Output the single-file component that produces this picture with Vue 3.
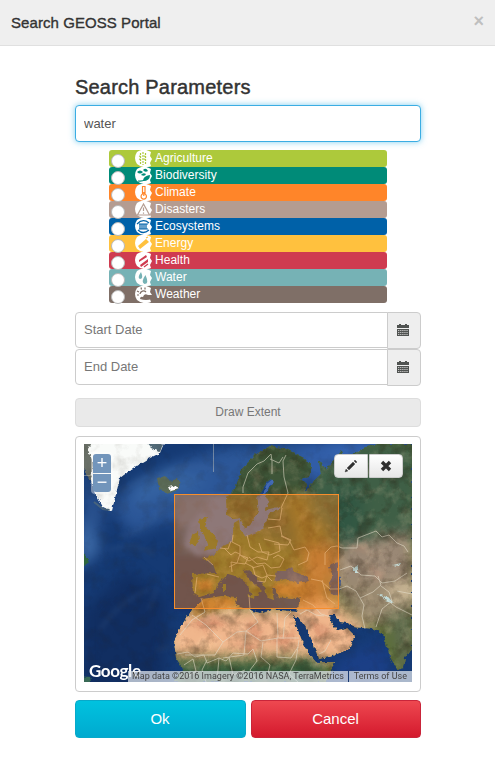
<script setup>
import { ref } from 'vue'

const query = ref('water')
const areas = [
  { name: 'Agriculture', color: '#adc93b', icon: 'M8 2v13M5.500 3v11M10.500 3v11M4 6l3 1M9 6l3 1M4 9l3 1M9 9l3 1', fill: '', dash: '2 1' },
  { name: 'Biodiversity', color: '#008b78', icon: 'M3 14Q10 15 14 9', fill: 'M2 5q3-3 6 0q-3 3-6 0M8 3q3-3 5 1q-3 2-5-1M6 8q2-3 5-1q-1 3-5 1M8 14q0-5 7-6q0 6-7 6' },
  { name: 'Climate', color: '#ff8529', icon: 'M7.500 2.500v7.500a2.700 2.700 0 1 0 2.500 0V2.500zM8.800 8v4', fill: '' },
  { name: 'Disasters', color: '#b49c91', icon: 'M8.500 3L2.500 14h12zM8.500 6.500V10M8.500 11.500v1.200', fill: '' },
  { name: 'Ecosystems', color: '#0061a8', icon: 'M2 6Q8 0 14 5M3 12Q8 17 14 12M5 6v5M7 6v5M9 6v5M11 6v5M4 6h9M4 11h9', fill: '' },
  { name: 'Energy', color: '#ffc13e', icon: 'M11 3l2-1', fill: 'M3 11l8-7 3 3-9 7z' },
  { name: 'Health', color: '#cf3b50', icon: 'M9 15l4-3', fill: 'M4 8l7-5 1 2-8 5zM5 13l8-6 0 3-7 5z' },
  { name: 'Water', color: '#76b2b5', icon: '', fill: 'M6 3q-4 6-1 7q4 0 1-7M10.500 6q-5 7-1 9q5 0 1-9' },
  { name: 'Weather', color: '#7f6f67', icon: 'M5 8a3.500 3.500 0 0 1 6-2M2 5l2 1M6 1.500l.5 2M10 1.500v2M2 9h2', fill: 'M5 13q0-3 3-2q1-4 5-2h4v4q-6 2-12 0' },
]
const dates = ['Start Date', 'End Date']
const borders = [
  'M243 493l0-6 5-14 9-9 7-3 7-7 1 7 0 13M270 459l9 4 4-6M286 455l-3 6 1 16 4 16-7 15',
  'M282 508l-2 12-12-1M268 528l12-2 2 10 9 4-3 5-14-1M264 539l15 4 1 8-10 4-8-3-3-9',
  'M281 536l8 4 5 10 11-3 4 6-2 8-9 4M247 535l3 12 8 5 11 0-2 8-10-3-8 4-9-6 0-9-8-4 1-7',
  'M224 548l7 7 4-3 5 2-3 9-6-1 1 10M220 548l8 1 3-8M229 567l8-4 8 1 3-6-8-3M249 557l8 7 8-1 6 5 9-1 4-8-6-4-5 3',
  'M245 563l8 4 2 8 7 3 5-2 5 5M252 568l11-3 4 10 9 1M267 575l-2 7-8-1M197 577l-2 16M207 574l12 3M204 557l9 8',
  'M325 565l0-12 6-6 6-1 5 2h15l1-10 18-7 6 6 7-2 8 8 7 3 4 6',
  'M311 579l10 2 9 8 9 0 8-3 9 5 8 14-2 11 3 13M340 570l11-4 10 9 14 1 7 7 13-2 12-8M360 598l13-6 8-7-3-9M381 586l8 6 3 9-10 8-6 18',
  'M322 580l5 18 8 6M303 600l10 5 8 9 10 3M300 614l7-4 9 5 8 1M291 612l-6 6-2 21M331 640l-6 11-6 3',
  'M201 598l4 14-13 8-12 15M192 615l14 10 17 17 14-10 9-1 12-9-8-12-1-15M223 642l-8 13-30 0M246 631l15 10 17-3-1-25M277 638l22 0M246 631l-2 24-21 3',
  'M177 654l11-2 7 5 9-2 3 8 12-5 7 3 7-8 15 1 5-5 4 12-7 9 6 10M263 642l-2 15 9 8-3 12M277 638l0 19 14 1 7-11M299 640l-3 20-7 14 9 8',
  'M184 665l9-6 3 12-7 5M207 660l-5 10 4 12M219 658l-2 22M229 657l4 18 12-5M387 600l9 7 16 8M397 591l15 3',
]
</script>

<template>
  <div class="dialog">
    <header>
      <h1>Search GEOSS Portal</h1>
      <button class="close" aria-label="Close">×</button>
    </header>

    <main>
      <h2>Search Parameters</h2>
      <input v-model="query" class="query" type="text" />

      <div class="areas">
        <label v-for="a in areas" :key="a.name" class="area" :style="{ background: a.color }">
          <span class="radio"></span>
          <svg class="badge" width="17" height="17" viewBox="0 0 17 17">
            <path d="M2 2Q8-2 14 1l2 1-1 4 2 3-2 4 1 3Q8 19 2 14-2 8 2 2" fill="#fff" />
            <path :d="a.icon" fill="none" :stroke="a.color" stroke-width="1.200" :stroke-dasharray="a.dash" />
            <path :d="a.fill" :fill="a.color" />
          </svg>
          <span class="name">{{ a.name }}</span>
        </label>
      </div>

      <div v-for="d in dates" :key="d" class="date">
        <span class="field">{{ d }}</span>
        <span class="addon">
          <svg width="12" height="13" viewBox="0 0 12 13">
            <path d="M0 1h12v3H0zM2 0h2v2H2zM8 0h2v2H8zM0 5h12v7H0z" fill="#505351" />
            <path d="M1 6.500h10M1 8.500h10M1 10.500h10" stroke="#c4c4c4" stroke-dasharray="1.300 .8" />
          </svg>
        </span>
      </div>

      <button class="extent">Draw Extent</button>

      <div class="panel">
        <div class="map">
          <svg class="tiles" viewBox="84 444 328 238" preserveAspectRatio="none">
            <defs>
              <filter id="soft" x="-50%" y="-50%" width="200%" height="200%" color-interpolation-filters="sRGB"><feGaussianBlur stdDeviation="7" /></filter>
              <filter id="mid" x="-50%" y="-50%" width="200%" height="200%" color-interpolation-filters="sRGB"><feGaussianBlur stdDeviation="2.500" /></filter>
              <filter id="rough" x="-5%" y="-5%" width="110%" height="110%" color-interpolation-filters="sRGB">
                <feTurbulence type="fractalNoise" baseFrequency=".25" numOctaves="2" seed="4" result="n" />
                <feDisplacementMap in="SourceGraphic" in2="n" scale="4" xChannelSelector="R" yChannelSelector="G" result="d" />
                <feGaussianBlur in="d" stdDeviation=".4" />
              </filter>
              <filter id="grain" x="0" y="0" width="100%" height="100%" color-interpolation-filters="sRGB">
                <feTurbulence type="fractalNoise" baseFrequency=".07" numOctaves="5" seed="8" />
                <feColorMatrix values="0 0 0 0 .15  0 0 0 0 .1  0 0 0 0 .05  2.5 0 0 0 -1.15" />
              </filter>
              <filter id="glints" x="0" y="0" width="100%" height="100%" color-interpolation-filters="sRGB">
                <feTurbulence type="fractalNoise" baseFrequency=".08" numOctaves="5" seed="21" />
                <feColorMatrix values="0 0 0 0 1  0 0 0 0 .87  0 0 0 0 .72  0 2.5 0 0 -1.2" />
              </filter>
              <clipPath id="land">
                <path d="M174 682L183 669 176 658 174 641 181 626 192 610 203 599 222 596 237 597 235 603 240 607 246 609 260 613 272 609 297 612 301 596 292 599 278 597 275 588 272 588 274 600 268 598 264 586 257 577 248 569 243 570 250 580 261 589 258 597 251 594 248 585 239 577 228 574 219 583 214 593 199 597 193 593 192 574 216 573 213 564 203 558 214 555 221 547 232 542 234 523 239 520 240 531 248 535 263 529 268 517 271 512 283 509 266 510 264 500 274 480 269 479 261 491 257 498 259 510 254 518 250 525 245 528 240 518 234 519 227 515 226 498 235 489 242 469 255 455 270 446 286 449 304 458 312 467 309 477 299 479 307 483 305 492 313 482 321 474 319 460 326 470 336 458 342 450 344 459 354 454 364 448 377 444 412 444 412 648 405 657 403 668 398 671 390 657 383 634 375 629 352 627 348 623 340 622 335 615 329 615 332 624 338 630 347 628 355 636 349 649 330 657 318 659 314 645 307 629 298 617 293 616 297 628 303 643 310 655 316 662 334 662 330 675 325 682z" />
              </clipPath>
            </defs>
            <rect x="84" y="444" width="328" height="238" fill="#153a74" />
            <g filter="url(#soft)">
              <path d="M110 505Q155 462 233 447L412 434V484H284L240 488 224 540 206 556 184 551 179 520 159 523 132 534z" fill="#2c5798" />
              <path d="M300 444h110v40H300z" fill="#315da6" />
              <path d="M84 465L104 510 96 544 84 568z" fill="#2b5390" />
              <path d="M130 485l40-19 38 12-23 17-28 2-21 10z" fill="#3563a2" />
              <path d="M78 520h6l18 28-18 18H78z" fill="#3c69a6" />
              <path d="M84 610L128 570 167 598 164 690 84 690z" fill="#112e61" />
              <path d="M345 655l40-15 10 45h-70z" fill="#1b3f86" />
              <path d="M318 445q30 15 60-3z" fill="#3e6fc2" />
            </g>
            <g filter="url(#mid)">
              <path d="M206 496h85v44H235L216 556H198L184 546 190 522z" fill="#446bb4" />
              <path d="M178 500l36-6-20 26-16 10z" fill="#3a5fa0" />
              <path d="M174 556h30l8 15h44l26 40h-92l-18 0z" fill="#14316c" />
            </g>
            <path d="M153 484Q177 455 220 472M164 504Q150 530 119 537M110 550q24-10 44 5M100 630q19-29 50-41M157 588l-8 22M169 647l-13 3M120 492l30-18" fill="none" stroke="#5678a6" opacity=".18" stroke-width="3" filter="url(#mid)" />
            <g filter="url(#rough)">
              <path d="M80 440h17l-3 22-2 20-4-4-8-18z" fill="#6a7068" />
              <path d="M91 441h74l-5 12-12 6-15 9-13 10-4 16-4 17-9-4-8-14-4-12 2-19-5-12z" fill="#f9fbf9" />
              <path d="M145 441h19l-4 11-9-4z" fill="#536b79" />
              <path d="M80 551l9 8-3 7-6-1z" fill="#2f663e" />
              <path d="M157 478l8-2 4 5 8-2 4 6-5 6-10 2-7-5z" fill="#5b6b57" />
              <path d="M169 487l8-2 1 4-7 2z" fill="#fff" />
              <path d="M80 676l10 1 2 7H80z" fill="#386a56" />
            </g>
            <path d="M94 502l9 7 7 1" fill="none" stroke="#607475" opacity=".6" stroke-width="2" />
            <g filter="url(#rough)">
              <g clip-path="url(#land)">
                <rect x="84" y="440" width="328" height="242" fill="#5c7034" />
                <g filter="url(#soft)">
                  <path d="M220 440h80l20 50-25 60-70-30z" fill="#3e5538" />
                  <path d="M282 494h65v62h-45z" fill="#6b6a30" />
                  <path d="M310 440h110v104l-57-2-53-25z" fill="#3f5f46" />
                  <path d="M328 490h34v60h-34z" fill="#315743" />
                  <path d="M302 545h38v35h-36zM285 580h42v30h-30z" fill="#a17240" />
                  <path d="M335 550h80v75h-51l-31-36z" fill="#9a8a70" />
                  <path d="M341 545l71-15v52h-69z" fill="#9a8875" />
                  <path d="M168 608h138l22-12 37 32 5 27-45 8-19-6H165z" fill="#f0b68c" />
                  <path d="M165 662h160v34H165z" fill="#335b3d" />
                  <path d="M391 580h30v22h-32z" fill="#c9b694" />
                  <path d="M385 611h32v49l-19 15z" fill="#5e6b4c" />
                </g>
                <path d="M192 598h43v8l-43 12zM274 583h34v13h-34zM197 580h16v10h-16z" fill="#b08040" filter="url(#mid)" />
                <g filter="url(#mid)" opacity=".5">
                  <path d="M190 624l22-9 14 9-19 7zM247 620l16 9-4 13-10-10zM229 643l29 1-4 8zM270 642l26-13-8 18zM309 621l23 8-13 11z" fill="#c97a5c" />
                  <path d="M198 638l20 7-14 5zM215 607l20 0-2 14zM278 620l12 6-7 11z" fill="#ffd1a1" />
                  <path d="M299 660l13 0-9 22h-14z" fill="#2f6242" />
                  <path d="M367 565l18 8-7 9zM345 550l20-7 3 9z" fill="#b98f79" />
                </g>
              </g>
              <path d="M199 519l8-2-2 10 8 7 5 8-2 6-13 3 5-7-4-9-4-7zM192 535l6-3 1 9-4 5-6-2zM223 584l3 0 0 8-3 0zM247 595l9 0-2 4z" fill="#596f32" />
              <path d="M274 582l3-11 8 0 7-4 3 5 13 5 2 4-13 2-12-4zM331 564l8-2-2 8 3 9-1 17-8-2-2-11 4-7-4-9z" fill="#2b4a8a" />
              <path d="M260 496l5-2 4 8-4 9-1 8-7 13-13 5 3-7 7-5 4-14z" fill="#446bb4" />
              <path d="M264 512l16-4M265 493l3-8 5-4" fill="none" stroke="#446bb4" stroke-width="3" />
              <path d="M353 568l4-2 0 6-4 0zM393 565l8-2-2 3zM378 594l11 4 5 5-9-3z" fill="#c1dcda" />
            </g>
            <g clip-path="url(#land)">
              <rect x="84" y="444" width="328" height="238" filter="url(#grain)" opacity=".28" />
              <rect x="84" y="444" width="328" height="238" filter="url(#glints)" opacity=".2" />
            </g>
            <g fill="none" stroke="#e4decb" stroke-width=".9" opacity=".65" stroke-linejoin="round">
              <path v-for="(b, i) in borders" :key="i" :d="b" />
              <path d="M213.500 444v28M84 475.500h8" opacity=".7" />
            </g>
            <rect x="84" y="444" width="328" height="238" filter="url(#grain)" opacity=".12" />
            <rect x="174.500" y="494.500" width="164" height="114" fill="#ff8c1e" fill-opacity=".4" stroke="#f78e2c" />
          </svg>
          <div class="zoomer"><button>+</button><button>−</button></div>
          <div class="tools">
            <button aria-label="Edit"><svg width="14" height="14" viewBox="0 0 14 14"><path d="M1 13l1-3 2 2zM3 9l6-6 2 2-6 6zM10 2l1-1 2 2-1 1z" fill="#303030" stroke="#303030" stroke-width=".3" /></svg></button>
            <button aria-label="Clear"><svg width="12" height="12" viewBox="0 0 12 12"><path d="M2 2l8 8M10 2l-8 8" stroke="#303030" stroke-width="3.400" /></svg></button>
          </div>
          <span class="google">Google</span>
          <div class="credits"><span>Map data ©2016 Imagery ©2016 NASA, TerraMetrics</span><i></i><span>Terms of Use</span></div>
        </div>
      </div>

      <div class="actions">
        <button class="ok">Ok</button>
        <button class="cancel">Cancel</button>
      </div>
    </main>
  </div>
</template>

<style>
body { margin: 0; background: #fff; }
</style>

<style scoped>
* { box-sizing: border-box; }
.dialog { width: 495px; height: 770px; overflow: hidden; font-family: "Liberation Sans", Arial, sans-serif; color: #333; }
button { font-family: inherit; margin: 0; padding: 0; }
header { height: 46px; display: flex; justify-content: space-between; padding: 0 11px; background: #efefef; border-bottom: 1px solid #e0e0e0; }
h1 { margin: 0; font-size: 15px; line-height: 46px; font-weight: 400; -webkit-text-stroke: .35px #333; letter-spacing: .07px; }
.close { border: 0; background: none; font-size: 18px; font-weight: 700; color: #bfbfbf; height: 43px; line-height: 43px; }
main { width: 346px; margin-left: 75px; padding-top: 29px; }
h2 { margin: 0; height: 30px; line-height: 25px; font-size: 20px; font-weight: 400; -webkit-text-stroke: .45px #333; letter-spacing: .2px; }
.query { display: block; width: 346px; height: 37px; padding: 0 8px; border: 1px solid #3bade3; border-radius: 4px; outline: 0; box-shadow: 0 0 6px rgba(60, 180, 230, .65); font: 13px "Liberation Sans", Arial, sans-serif; color: #555; }
.areas { margin: 8px 34px 0; }
.area { display: flex; height: 17px; border-radius: 3px; padding-left: 2px; color: #fff; font-size: 12px; line-height: 16px; }
.radio { width: 14px; height: 14px; margin-top: 4px; border-radius: 50%; background: #fff; border: 1px solid #b8b8b8; flex: none; position: relative; z-index: 1; }
.badge { margin-left: 10px; flex: none; }
.name { margin-left: 3px; letter-spacing: .03px; }
.date { display: flex; height: 36px; margin-top: 1px; }
.areas + .date { margin-top: 9px; }
.field { flex: 1; border: 1px solid #ccc; border-radius: 4px 0 0 4px; padding-left: 8px; line-height: 34px; font-size: 13px; color: #777; }
.addon { width: 34px; height: 37px; margin-left: -1px; padding-right: 2px; display: flex; align-items: center; justify-content: center; background: #eee; border: 1px solid #ccc; border-radius: 0 4px 4px 0; }
.extent { display: block; width: 346px; height: 29px; margin-top: 13px; border: 1px solid #ddd; border-radius: 4px; background: #eaeaea; color: #777; font-size: 12px; padding-bottom: 2px; }
.panel { height: 256px; margin-top: 9px; padding: 7px 8px; border: 1px solid #ccc; border-radius: 4px; }
.map { position: relative; width: 328px; height: 238px; overflow: hidden; }
.tiles { display: block; width: 328px; height: 238px; }
.zoomer { position: absolute; left: 7px; top: 8px; width: 22px; height: 42px; padding: 2px; border-radius: 4px; background: rgba(255, 255, 255, .4); display: grid; gap: 1px; }
.zoomer button { border: 0; background: #7295bb; color: #fff; font-size: 18px; line-height: 17px; }
.zoomer button:first-child { border-radius: 3px 3px 0 0; }
.zoomer button:last-child { border-radius: 0 0 3px 3px; }
.tools { position: absolute; left: 250px; top: 10px; display: flex; gap: 1px; }
.tools button { width: 34px; height: 24px; display: flex; align-items: center; justify-content: center; border: 1px solid #ccc; background: linear-gradient(#fff, #e6e6e6); }
.tools button:first-child { border-radius: 4px 0 0 4px; }
.tools button:last-child { border-radius: 0 4px 4px 0; }
.google { position: absolute; left: 5px; top: 217px; font: 700 17px/20px Lato, sans-serif; color: #fff; letter-spacing: -.4px; }
.credits { position: absolute; right: 0; bottom: 0; width: 284px; height: 11px; display: flex; justify-content: space-between; padding: 0 5px 0 4px; background: rgba(229, 233, 239, .72); color: #444; font: 9px/11px Roboto, sans-serif; white-space: nowrap; }
.credits i { width: 1px; background: #183870; }
.actions { display: grid; grid-template-columns: 171px 170px; gap: 5px; margin-top: 8px; }
.actions button { height: 38px; border-radius: 4px; color: #fff; font-size: 15px; padding: 0 1px 2px 0; }
.ok { border: 1px solid #08a9c9; background: linear-gradient(#00c2df, #00aacf); }
.cancel { border: 1px solid #c9253a; background: linear-gradient(#ee4850, #d4192d); }
</style>
